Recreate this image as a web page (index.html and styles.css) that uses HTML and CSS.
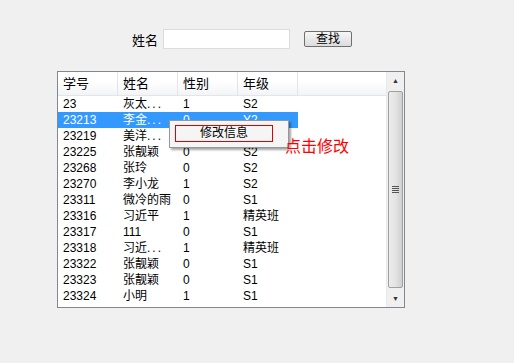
FILE: index.html
```html
<!DOCTYPE html>
<html lang="zh-CN">
<head>
  <meta charset="UTF-8" />
  <title>学生信息</title>
  <link rel="stylesheet" href="styles.css">
</head>
<body>

  <!-- Search bar -->
  <div class="search">
    <label>姓名</label>
    <input type="text" class="search-input" />
    <button class="btn">查找</button>
  </div>

  <!-- Student table -->
  <div class="table-box">
    <div class="list">
      <div class="head">
        <div class="cell">学号</div>
        <div class="cell">姓名</div>
        <div class="cell">性别</div>
        <div class="cell">年级</div>
        <div class="cell rest"></div>
      </div>
      <div class="row"><span>23</span><span>灰太<i class="dots">...</i></span><span>1</span><span>S2</span></div>
      <div class="row selected"><span>23213</span><span>李金<i class="dots">...</i></span><span>0</span><span>Y2</span></div>
      <div class="row"><span>23219</span><span>美洋<i class="dots">...</i></span><span>0</span><span>S2</span></div>
      <div class="row"><span>23225</span><span>张靓颖</span><span>0</span><span>S2</span></div>
      <div class="row"><span>23268</span><span>张玲</span><span>0</span><span>S2</span></div>
      <div class="row"><span>23270</span><span>李小龙</span><span>1</span><span>S2</span></div>
      <div class="row"><span>23311</span><span>微冷的雨</span><span>0</span><span>S1</span></div>
      <div class="row"><span>23316</span><span>习近平</span><span>1</span><span>精英班</span></div>
      <div class="row"><span>23317</span><span>111</span><span>0</span><span>S1</span></div>
      <div class="row"><span>23318</span><span>习近<i class="dots">...</i></span><span>1</span><span>精英班</span></div>
      <div class="row"><span>23322</span><span>张靓颖</span><span>0</span><span>S1</span></div>
      <div class="row"><span>23323</span><span>张靓颖</span><span>0</span><span>S1</span></div>
      <div class="row"><span>23324</span><span>小明</span><span>1</span><span>S1</span></div>
    </div>

    <div class="scrollbar">
      <div class="arrow up">&#9650;</div>
      <div class="thumb"><span class="grip"></span></div>
      <div class="arrow down">&#9660;</div>
    </div>

    <!-- Right-click menu -->
    <div class="menu">
      <div class="menu-item">修改信息</div>
    </div>
    <div class="hint">点击修改</div>
  </div>

</body>
</html>
```

FILE: styles.css
```css
body {
  margin: 0;
  background: #f0f0f0;
  font-family: "Liberation Sans", "Noto Sans CJK SC", sans-serif;
  font-size: 12px;
  color: #000;
}
.search {
  display: flex;
  align-items: center;
  padding: 29px 0 0 132px;
  height: 20px;
}
.search label {
  font-size: 13px;
  width: 31px;
}
.search-input {
  width: 123px;
  height: 16px;
  padding: 1px;
  border: 1px solid #dcdcdc;
  background: #fff;
  margin: 0;
}
.btn {
  margin-left: 14px;
  width: 48px;
  height: 16px;
  padding: 0;
  border: 1px solid #6f6f6f;
  border-radius: 2px;
  background: linear-gradient(#f6f6f6, #dcdcdc);
  font-family: inherit;
  font-size: 12px;
  line-height: 14px;
}
.table-box {
  position: relative;
  display: flex;
  margin: 22px 0 0 57px;
  width: 346px;
  height: 235px;
  border: 1px solid #828790;
  background: #fff;
}
.list {
  flex: 1;
}
.head {
  display: flex;
  height: 23px;
  background: linear-gradient(#fff 40%, #f3f4f6);
  border-bottom: 1px solid #e3e5e8;
}
.head .cell {
  width: 54px;
  padding-left: 5px;
  line-height: 23px;
  font-size: 13px;
  border-right: 1px solid #e3e5e8;
}
.head .rest {
  flex: 1;
  border-right: none;
}
.row {
  display: flex;
  width: 240px;
  height: 16px;
  line-height: 16px;
}
.row span {
  width: 55px;
  padding-left: 5px;
}
.dots {
  font-style: normal;
  letter-spacing: 2px;
}
.selected {
  background: #3399ff;
  color: #fff;
}
.scrollbar {
  width: 17px;
  display: flex;
  flex-direction: column;
  background: #f0f0f0;
  border-left: 1px solid #e9e9e9;
}
.arrow {
  height: 17px;
  font-size: 7px;
  text-align: center;
  line-height: 17px;
  color: #333;
}
.thumb {
  flex: 1;
  margin: 2px 1px;
  border: 1px solid #a0a0a0;
  border-radius: 2px;
  background: linear-gradient(90deg, #ececec, #e4e4e4 50%, #cfcfcf);
  display: flex;
  align-items: center;
  justify-content: center;
}
.grip {
  width: 7px;
  height: 7px;
  background: repeating-linear-gradient(#555 0 1px, transparent 1px 2px);
}
.menu {
  position: absolute;
  left: 111px;
  top: 48px;
  width: 118px;
  height: 26px;
  background: #f5f5f5;
  border: 1px solid #979797;
  box-shadow: 2px 2px 2px rgba(0, 0, 0, 0.35);
}
.menu-item {
  margin: 4px 0 0 5px;
  width: 96px;
  height: 15px;
  border: 1px solid #e00000;
  text-align: center;
  line-height: 15px;
  font-size: 12px;
}
.hint {
  position: absolute;
  left: 227px;
  top: 61px;
  color: #ff0000;
  font-size: 16px;
}
```
